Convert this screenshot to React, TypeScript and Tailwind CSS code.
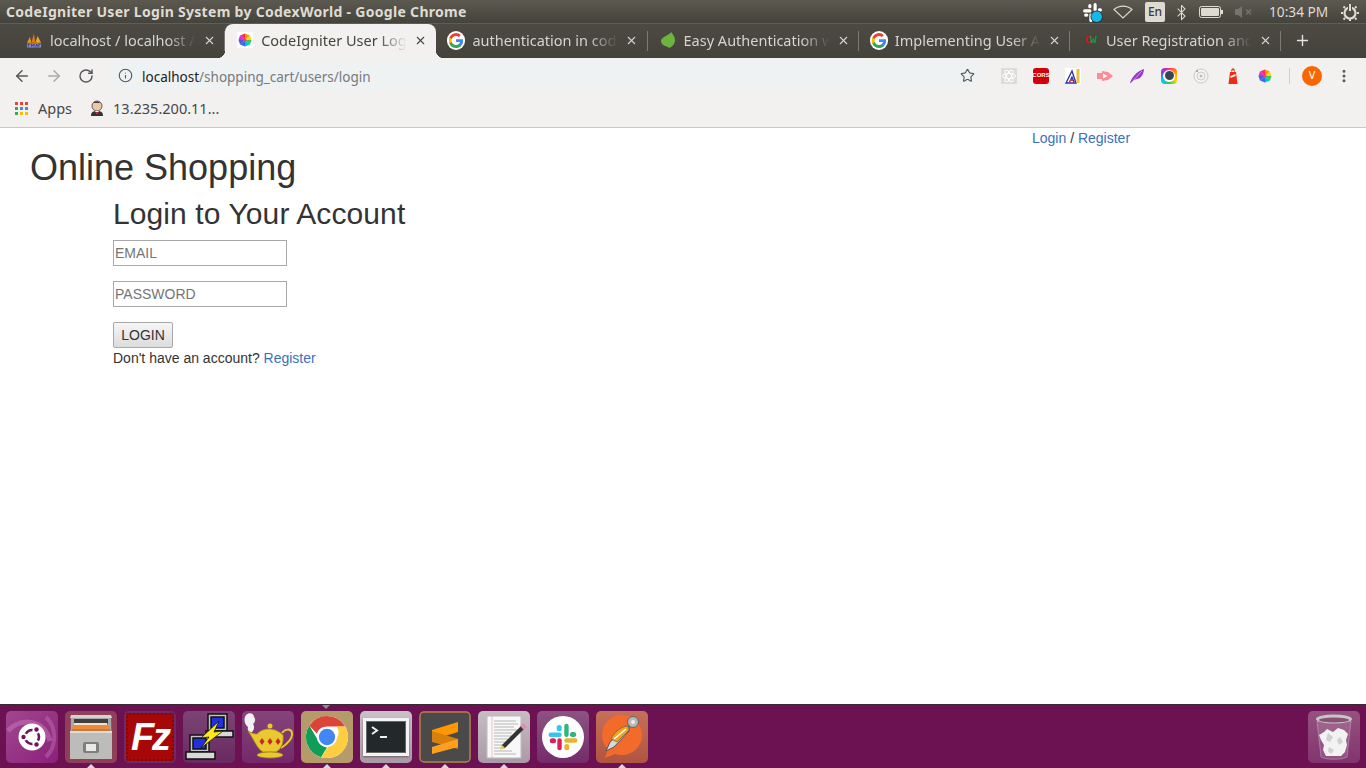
import React from "react";
import { ArrowLeft, ArrowRight, RotateCw, Info, Star, EllipsisVertical, X, Plus, Bluetooth } from "lucide-react";

const GoogleIcon = () => (
  <svg viewBox="0 0 18 18" className="w-4 h-4 rounded-full bg-white p-[1.5px] box-content -m-[1px]">
    <path fill="#4285f4" d="M17.6 9.2c0-.6-.1-1.2-.2-1.8H9v3.4h4.8a4.1 4.1 0 0 1-1.8 2.7v2.2h2.9c1.7-1.6 2.7-3.9 2.7-6.5z" />
    <path fill="#34a853" d="M9 18c2.4 0 4.5-.8 6-2.2l-2.9-2.2c-.8.5-1.8.9-3.1.9-2.4 0-4.3-1.6-5-3.7H1v2.3A9 9 0 0 0 9 18z" />
    <path fill="#fbbc05" d="M4 10.7a5.4 5.4 0 0 1 0-3.4V5H1a9 9 0 0 0 0 8z" />
    <path fill="#ea4335" d="M9 3.6c1.3 0 2.5.5 3.4 1.3L15 2.4A9 9 0 0 0 1 5l3 2.3c.7-2.1 2.6-3.7 5-3.7z" />
  </svg>
);

// phpmyadmin sails
const Pma = () => (
  <svg viewBox="0 0 18 18" className="w-[17px] h-[17px]">
    <path fill="#f0950f" d="M1 11.500 4.500 5l1.500 6.500z" />
    <path fill="#e8770c" d="M6 11.500 9 1l1.500 10.500z" />
    <path fill="#f0a51a" d="M10.500 11.500 13 4l4 7.500z" />
    <rect x="1" y="12" width="16" height="5" rx="1" fill="#8d8fc4" />
    <path stroke="#2f3270" strokeWidth="1" d="M2.500 16v-3h2M6 16v-3l1.500 2 1.500-2v3M11 16l1-3 1 3M14.500 16v-3h2" fill="none" />
  </svg>
);

const Wheel = ({ square }: { square?: boolean }) => (
  <svg viewBox="0 0 16 16" className={`w-4 h-4 ${square ? "bg-white" : ""}`}>
    <path fill="#ff2d55" d="M8 8 3 3.500 8 1.500z" />
    <path fill="#ff9500" d="M8 8V1.500l5 2z" />
    <path fill="#ffd60a" d="M8 8l5-4.500 1.500 4.500z" />
    <path fill="#34c759" d="M8 8h6.500L13 12.500z" />
    <path fill="#00c7be" d="M8 8l5 4.500-5 2z" />
    <path fill="#2c6bff" d="M8 8v6.500l-5-2z" />
    <path fill="#5856d6" d="M8 8l-5 4.500L1.500 8z" />
    <path fill="#d52fd8" d="M8 8H1.500L3 3.500z" />
    <circle cx="8" cy="8" r="1.500" fill="#ff3b7f" />
  </svg>
);

const Leaf = () => (
  <svg viewBox="0 0 16 18" className="w-4 h-[18px]">
    <path fill="#6cb33f" d="M11.5 1C12 3 15 5 15 9c0 4-3 7-6 8-.3-.5-.6-.8-1-1C4 15 1 13 1 10c0-4 7-5 10.500-9z" />
  </svg>
);

const tabs = [
  { title: "localhost / localhost /", icon: <Pma /> },
  { title: "CodeIgniter User Logi", icon: <Wheel square />, active: true },
  { title: "authentication in cod", icon: <GoogleIcon /> },
  { title: "Easy Authentication w", icon: <Leaf /> },
  { title: "Implementing User Au", icon: <GoogleIcon /> },
  {
    title: "User Registration and",
    icon: (
      <span className="whitespace-nowrap text-[11px] leading-4 font-['Liberation_Mono',monospace] tracking-[-1.500px]">
        <span className="text-[#e11212]">C</span>
        <span className="text-[#13a84a]">W</span>
      </span>
    ),
  },
];

const Tab = ({ title, icon, active }: { title: string; icon: React.ReactNode; active?: boolean }) => (
  <div className={`relative w-[211.2px] h-[34px] shrink-0 flex items-center pl-3 pb-[2px] ${active ? "bg-[#f2f1f0] rounded-t-[8px] text-[#45443f]" : "text-[#d5d4d0]"}`}>
    {active && <span className="absolute -left-2 bottom-0 w-2 h-2 bg-[radial-gradient(circle_at_0_0,transparent_8px,#f2f1f0_8.500px)]" />}
    {active && <span className="absolute -right-2 bottom-0 w-2 h-2 bg-[radial-gradient(circle_at_100%_0,transparent_8px,#f2f1f0_8.500px)]" />}
    <span className="w-4 h-4 flex items-center justify-center shrink-0">{icon}</span>
    <span className="ml-2 w-[146px] overflow-hidden whitespace-nowrap text-[14.500px] leading-5 [mask-image:linear-gradient(to_right,black_80%,transparent)]">{title}</span>
    <X size={13} strokeWidth={2} className="ml-[7px] shrink-0" />
    {!active && <span className="absolute right-0 top-[7px] h-5 w-px bg-[#7c7a72]" />}
  </div>
);

const ExtSlot = ({ children }: { children: React.ReactNode }) => (
  <span className="w-8 h-4 flex items-center justify-center shrink-0">{children}</span>
);

const Extensions = () => (
  <div className="flex items-center">
    <ExtSlot>
      <svg viewBox="0 0 16 16" className="w-4 h-4">
        <rect width="16" height="16" fill="#dcdcdc" />
        <g fill="none" stroke="#fff" strokeWidth="1">
          <ellipse cx="8" cy="8" rx="6.500" ry="2.500" />
          <ellipse cx="8" cy="8" rx="6.500" ry="2.500" transform="rotate(60 8 8)" />
          <ellipse cx="8" cy="8" rx="6.500" ry="2.500" transform="rotate(120 8 8)" />
        </g>
      </svg>
    </ExtSlot>
    <ExtSlot>
      <span className="w-4 h-4 rounded-[3px] bg-[#d3000c] text-white text-[6px] font-bold flex items-center justify-center font-['Liberation_Sans',sans-serif]">CORS</span>
    </ExtSlot>
    <ExtSlot>
      <svg viewBox="0 0 16 16" className="w-4 h-4">
        <rect width="16" height="16" fill="#fff" />
        <path fill="none" stroke="#2b2ba8" strokeWidth="1.300" d="M1 15 7 3l4 12zM4.500 14 7 9l2 5" />
        <rect x="11.500" y="1" width="3" height="14" fill="#e6c13a" />
        <path fill="#d33" d="M5 11h3v2H5z" />
      </svg>
    </ExtSlot>
    <ExtSlot>
      <svg viewBox="0 0 16 16" className="w-4 h-4">
        <path fill="#ff8a97" d="M0 5h5V3l6 1 5 4-5 4-6 1v-2H0z" />
        <path fill="#fff" d="M6 5.500 10.500 8 6 10.500z" />
      </svg>
    </ExtSlot>
    <ExtSlot>
      <svg viewBox="0 0 16 16" className="w-4 h-4">
        <path fill="#9a35c9" d="M1 15C3 9 8 3 15 1c0 4-2 7-4 9-2 1-4 1-6 2l-3 3z" />
        <path stroke="#e6c8f2" strokeWidth=".7" d="M2 15 13 3" />
      </svg>
    </ExtSlot>
    <ExtSlot>
      <span className="w-4 h-4 rounded-[4px] bg-[conic-gradient(#ff2d87,#ff9500,#ffd60a,#34c759,#00c7ff,#7a3df0,#ff2d87)] flex items-center justify-center">
        <span className="w-3 h-3 rounded-full bg-white flex items-center justify-center">
          <span className="w-[9px] h-[9px] rounded-full bg-[#37474f]" />
        </span>
      </span>
    </ExtSlot>
    <ExtSlot>
      <svg viewBox="0 0 16 16" className="w-4 h-4">
        <circle cx="8" cy="8" r="7" fill="#f4f4f4" stroke="#c8c8c8" />
        <circle cx="8" cy="8" r="4" fill="none" stroke="#c8c8c8" />
        <circle cx="8" cy="8" r="1.500" fill="#bbb" />
        <circle cx="4" cy="3" r="1" fill="#999" />
      </svg>
    </ExtSlot>
    <ExtSlot>
      <svg viewBox="0 0 16 16" className="w-4 h-4">
        <path fill="#f32a12" d="M6 2l2-2 2 2v2h1l1.500 12H3.500L5 4h1z" />
        <path fill="#fff" d="M5.500 8l5-2v2l-5 2zM6.500 2.500h3V4h-3z" />
      </svg>
    </ExtSlot>
    <ExtSlot>
      <Wheel />
    </ExtSlot>
  </div>
);

const Tile = ({ bg, children }: { bg: string; children: React.ReactNode }) => (
  <div className={`w-[52px] h-[52px] rounded-[5px] shrink-0 flex items-center justify-center overflow-hidden ${bg}`}>{children}</div>
);

const UbuntuIcon = () => (
  <svg viewBox="0 0 52 52" className="w-[52px] h-[52px]">
    <path fill="none" stroke="#c77ab9" strokeWidth="5" opacity=".5" d="M2 20C14 6 38 8 44 30" />
    <path fill="none" stroke="#c77ab9" strokeWidth="4" opacity=".4" d="M40 6c10 10 12 28 0 40" />
    <circle cx="26" cy="26" r="13.500" fill="#fff" />
    <circle cx="26" cy="26" r="7" fill="none" stroke="#6f1560" strokeWidth="2.600" />
    <g fill="#fff">
      <circle cx="18.500" cy="26" r="3.400" />
      <circle cx="29.800" cy="19.500" r="3.400" />
      <circle cx="29.800" cy="32.500" r="3.400" />
    </g>
    <g fill="#6f1560">
      <circle cx="17.500" cy="26" r="2.200" />
      <circle cx="30.500" cy="18.500" r="2.200" />
      <circle cx="30.500" cy="33.500" r="2.200" />
    </g>
  </svg>
);

const FilesIcon = () => (
  <svg viewBox="0 0 52 52" className="w-[52px] h-[52px]">
    <path fill="#a8a8a8" d="M6 5h40l1 43H5z" />
    <path fill="#d2d2d2" d="M6 4h40l1 3H5z" />
    <path fill="#3f3f3f" d="M9 8h34v12H9z" />
    <path fill="#f3e2c6" d="M9 12h33l1 3H9z" />
    <path fill="#ee8a3c" d="M8 14h36l1 5H7z" />
    <path fill="#c47a3b" d="M7 18h38v2H7z" />
    <path fill="#bcbcba" d="M5 20h42v27a1 1 0 0 1-1 1H6a1 1 0 0 1-1-1z" />
    <rect x="5" y="20" width="42" height="2" fill="#dcdcdc" />
    <rect x="18" y="31" width="16" height="11" rx="2" fill="#7e7e7e" />
    <rect x="21" y="33" width="10" height="7" fill="#e8e8e8" />
  </svg>
);

const FzIcon = () => (
  <div className="w-[48px] h-[48px] bg-[#a80707] flex items-center justify-center rounded-[2px] border-[2px] border-dotted border-[#7e0b0b]">
    <span className="text-white font-bold italic text-[38px] leading-none font-['Liberation_Sans',sans-serif] tracking-[-2px]">Fz</span>
  </div>
);

const PuttyIcon = () => (
  <svg viewBox="0 0 52 52" className="w-[52px] h-[52px]">
    <g stroke="#111" strokeWidth="1.500">
      <rect x="25" y="3" width="19" height="17" fill="#c4c4c4" />
      <rect x="28" y="6" width="13" height="11" fill="#2130d8" />
      <rect x="23" y="20" width="27" height="6" fill="#d8d8d8" />
      <rect x="7" y="24" width="19" height="17" fill="#c4c4c4" />
      <rect x="10" y="27" width="13" height="11" fill="#2130d8" />
      <rect x="3" y="41" width="29" height="7" fill="#d8d8d8" />
    </g>
    <path fill="#ffe81a" stroke="#111" strokeWidth=".8" d="M36 10 18 27l8-1-8 11 22-17-9 1z" />
  </svg>
);

const GenieIcon = () => (
  <svg viewBox="0 0 52 52" className="w-[52px] h-[52px]">
    <path fill="#f2f2f2" d="M4 4c3-3 8-2 8 2 2 2 1 6-1 7 2 3 1 6-1 8-3 1-5-2-4-5-3-2-5-8-2-12z" />
    <path fill="none" stroke="#e5c52e" strokeWidth="2" d="M40 22c3-4 9-5 10 0 1 6-5 11-11 15" />
    <path fill="#e9c92f" stroke="#a5871a" strokeWidth=".8" d="M6 20c4 2 6 3 9 3 3-3 6-5 12-5s11 3 14 6c1 6-1 14-7 17h-13C15 38 13 30 6 20z" />
    <circle cx="28" cy="15" r="2.500" fill="#e9c92f" />
    <ellipse cx="28" cy="44" rx="13" ry="3" fill="#e9c92f" stroke="#a5871a" strokeWidth=".8" />
    <g fill="#c62828">
      <path d="M20 27l2.500 3.500L20 34l-2.500-3.500z" />
      <path d="M28 27l2.500 3.500L28 34l-2.500-3.500z" />
      <path d="M36 27l2.500 3.500L36 34l-2.500-3.500z" />
    </g>
  </svg>
);

const ChromeIcon = () => (
  <svg viewBox="0 0 48 48" className="w-[46px] h-[46px]">
    <circle cx="24" cy="24" r="22" fill="#fff" />
    <path fill="#db4437" d="M24 2a22 22 0 0 1 19 11H24a11 11 0 0 0-10.500 7.500L5.600 12A22 22 0 0 1 24 2z" />
    <path fill="#0f9d58" d="M5.600 12l9.500 16.500A11 11 0 0 0 24 35l-6.200 10.100A22 22 0 0 1 5.600 12z" />
    <path fill="#ffcd40" d="M43 13a22 22 0 0 1-25.200 32.100L28 30a11 11 0 0 0 6-17z" />
    <circle cx="24" cy="24" r="10.500" fill="#fff" />
    <circle cx="24" cy="24" r="8.500" fill="#4285f4" />
  </svg>
);

const TerminalIcon = () => (
  <div className="w-[46px] h-[38px] bg-[#f4f4f4] p-[3px] shadow-[0_1px_2px_#0006]">
    <div className="w-full h-full bg-[#23282a] pl-1 pt-1 border border-[#666]">
      <svg viewBox="0 0 24 14" className="w-6 h-3.5">
        <path fill="none" stroke="#eee" strokeWidth="2" d="M1 1l5 3.500L1 8" />
        <path stroke="#eee" strokeWidth="2" d="M9 11h7" />
      </svg>
    </div>
  </div>
);

const SublimeIcon = () => (
  <svg viewBox="0 0 52 52" className="w-[52px] h-[52px]">
    <rect x="1" y="1" width="50" height="50" rx="4" fill="#4a4a4a" stroke="#bb7b4c" strokeWidth="1.500" />
    <path fill="#ff9800" d="M39 11v10L13 29V19z" />
    <path fill="#d97f0c" d="M13 20l26 8v10L13 31z" />
    <path fill="#ff9f1c" d="M39 28 13 36v7l26-7z" />
  </svg>
);

const EditorIcon = () => (
  <svg viewBox="0 0 52 52" className="w-[52px] h-[52px]">
    <rect x="9" y="5" width="34" height="42" fill="#f8f8f8" stroke="#bbb" />
    <path stroke="#f0a0a0" strokeWidth=".6" d="M14 5v42" />
    <g stroke="#a5a5a5" strokeWidth=".8">
      <path d="M16 10h22M16 13h24M16 16h20M16 19h24M16 22h18M16 25h20M16 28h14M16 31h12M16 34h10M16 37h8M16 40h18M16 43h22" />
    </g>
    <path fill="#333" d="M45 13l3 3-21 21-4 1 1-4z" />
    <path fill="#e090a8" d="M42 15l3-3 4 4-3 3z" />
    <path fill="#e8d24a" d="M24 34l3 3-5 2z" />
  </svg>
);

const SlackIcon = ({ size }: { size: number }) => (
  <svg viewBox="0 0 54 54" width={size} height={size}>
    <g fill="#36c5f0">
      <rect x="4" y="20" width="21" height="7" rx="3.500" />
      <rect x="17" y="8" width="8" height="10" rx="4" />
    </g>
    <g fill="#2eb67d">
      <rect x="29" y="6" width="7" height="21" rx="3.500" />
      <rect x="38" y="19" width="10" height="8" rx="4" />
    </g>
    <g fill="#ecb22e">
      <rect x="29" y="29" width="21" height="7" rx="3.500" />
      <rect x="29" y="38" width="8" height="10" rx="4" />
    </g>
    <g fill="#e01e5a">
      <rect x="18" y="29" width="7" height="19" rx="3.500" />
      <rect x="6" y="29" width="10" height="8" rx="4" />
    </g>
  </svg>
);

const PostmanIcon = () => (
  <svg viewBox="0 0 52 52" className="w-[52px] h-[52px]">
    <circle cx="26" cy="24" r="20" fill="#f26b2a" />
    <path fill="#f26b2a" d="M12 38l-3 9 10-4z" />
    <circle cx="37" cy="11" r="5.500" fill="#b8b8b8" stroke="#666" />
    <circle cx="37" cy="11" r="2" fill="#eee" />
    <path fill="#d8d8d8" stroke="#555" d="M33 15 14 31l-4 9 8-4 15-16z" />
    <path fill="#f6a11b" stroke="#555" strokeWidth=".6" d="M32 15c-6 0-14 6-17 13l6 3 12-12z" />
    <path stroke="#fff" strokeWidth="1.500" d="M18 28 30 18" />
  </svg>
);

const TrashIcon = () => (
  <svg viewBox="0 0 52 52" className="w-[52px] h-[52px]">
    <path fill="#ffffff22" stroke="#ffffff44" d="M9 10l4 36c4 3 22 3 26 0l4-36z" />
    <ellipse cx="26" cy="8" rx="18" ry="4.500" fill="#c6c6c6" />
    <ellipse cx="26" cy="9" rx="15" ry="2.500" fill="#8c5077" />
    <path fill="#f2f2f2" d="M11 24l5-3 3-3 6 3 5-4 6 2 4 4-2 6 1 5-2 7-4 4H18l-3-6 1-5-3-5z" />
    <path fill="#cfcfcf" d="M20 22l5 4-3 5-4-2zM32 26l3 5-4 3-2-5zM21 36l5 3-3 4-3-3z" />
  </svg>
);

const dockItems = [
  { bg: "bg-gradient-to-br from-[#a1468f] to-[#8b1f7a]", icon: <UbuntuIcon />, running: false },
  { bg: "bg-[#8f3f57]", icon: <FilesIcon />, running: true },
  { bg: "bg-[#6f2a63]", icon: <FzIcon />, running: false },
  { bg: "bg-gradient-to-b from-[#7b4474] to-[#682a60]", icon: <PuttyIcon />, running: false },
  { bg: "bg-gradient-to-b from-[#84447a] to-[#74296a]", icon: <GenieIcon />, running: false },
  { bg: "bg-[#b59b6a]", icon: <ChromeIcon />, running: true },
  { bg: "bg-gradient-to-b from-[#c9c2c7] to-[#a99aa5]", icon: <TerminalIcon />, running: true },
  { bg: "bg-[#4a4a4a]", icon: <SublimeIcon />, running: true },
  { bg: "bg-gradient-to-b from-[#c7bcc4] to-[#aa9aa6]", icon: <EditorIcon />, running: true },
  {
    bg: "bg-gradient-to-b from-[#8c5382] to-[#742b6a]",
    icon: (
      <span className="w-[42px] h-[42px] rounded-full bg-white flex items-center justify-center">
        <SlackIcon size={34} />
      </span>
    ),
    running: false,
  },
  { bg: "bg-gradient-to-b from-[#c4705a] to-[#b0543f]", icon: <PostmanIcon />, running: true },
];

const App = () => {
  return (
    <div className="w-[1366px] h-[768px] overflow-hidden flex flex-col bg-white font-['Liberation_Sans',sans-serif] text-[14px] text-[#333]">
      {/* ubuntu top panel */}
      <div className="h-6 shrink-0 flex items-center bg-gradient-to-b from-[#5c5a50] to-[#43423b] text-[#dfdbd2] font-['Noto_Sans',sans-serif]">
        <span className="ml-1.5 font-bold text-[14px] leading-5 tracking-[.3px]">CodeIgniter User Login System by CodexWorld - Google Chrome</span>
        <div className="ml-auto flex items-center">
          <svg viewBox="0 0 20 20" className="w-[21px] h-[21px] mr-[10px]">
            <g fill="#fff">
              <rect x="1" y="7" width="8" height="3" rx="1.500" />
              <rect x="6" y="2" width="3" height="4" rx="1.500" />
              <rect x="11" y="1" width="3" height="8" rx="1.500" />
              <rect x="15" y="6" width="4" height="3" rx="1.500" />
              <rect x="7" y="11" width="3" height="8" rx="1.500" />
              <rect x="2" y="11" width="4" height="3" rx="1.500" />
            </g>
            <circle cx="14" cy="14" r="5.500" fill="#16b6e8" stroke="#222" strokeWidth=".8" />
          </svg>
          <svg viewBox="0 0 20 14" className="w-5 h-[14px] mr-3">
            <path fill="none" stroke="#dfdbd2" strokeWidth="1.100" d="M1 4.500C6 0 14 0 19 4.500L10 13z" />
          </svg>
          <span className="w-5 h-5 rounded-[2px] bg-[#dfdbd2] text-[#3c3b37] text-[12px] font-medium flex items-center justify-center">En</span>
          <Bluetooth size={17} strokeWidth={1.500} className="ml-[8px] mr-[9px]" />
          <svg viewBox="0 0 24 14" className="w-6 h-[14px] mr-[11px]">
            <rect x=".5" y="1.500" width="21" height="11" rx="2" fill="none" stroke="#dfdbd2" />
            <rect x="2" y="3" width="18" height="8" rx="1" fill="#dfdbd2" />
            <rect x="22" y="5" width="2" height="4" fill="#dfdbd2" />
          </svg>
          <svg viewBox="0 0 20 14" className="w-5 h-[14px] mr-[15px]">
            <path fill="#75736b" d="M1 4h3l4-3v12l-4-3H1z" />
            <path stroke="#75736b" strokeWidth="1.400" d="M12 4.500l5 5M17 4.500l-5 5" />
          </svg>
          <span className="text-[13.700px] leading-5 w-[60px] whitespace-nowrap">10:34 PM</span>
          <svg viewBox="0 0 18 18" className="w-[18px] h-[18px] ml-[12px] mr-[7px]">
            <circle cx="9" cy="10" r="5.500" fill="none" stroke="#dfdbd2" strokeWidth="2.200" />
            <g stroke="#dfdbd2" strokeWidth="2">
              <path d="M9 15v3M2 10H0M18 10h-2M4 5 2.500 3.500M14 5l1.500-1.500M4 15l-1.500 1.500M14 15l1.500 1.500" />
            </g>
            <path stroke="#4c4a43" strokeWidth="4" d="M9 1v7" />
            <path stroke="#dfdbd2" strokeWidth="2" d="M9 1v7" />
          </svg>
        </div>
      </div>

      {/* chrome tab strip */}
      <div className="h-[34px] shrink-0 flex pl-[14px] border-t border-t-[#5f5d54] bg-gradient-to-b from-[#4c4a43] to-[#43423b] font-['Noto_Sans',sans-serif] box-content -mt-px">
        {tabs.map((t) => (
          <Tab key={t.title} title={t.title} icon={t.icon} active={t.active} />
        ))}
        <Plus size={17} strokeWidth={2} className="ml-[13px] mt-[8px] text-[#e5e3de]" />
      </div>

      {/* chrome toolbar */}
      <div className="h-[35px] shrink-0 flex items-center bg-[#f2f1f0] font-['Noto_Sans',sans-serif] text-[#5f6368]">
        <ArrowLeft size={18} strokeWidth={2} className="ml-[13px] text-[#55585c]" />
        <ArrowRight size={18} strokeWidth={2} className="ml-[14px] text-[#a9abad]" />
        <RotateCw size={16} strokeWidth={2.200} className="ml-[15px] text-[#55585c]" />
        <div className="ml-[14px] w-[875px] h-[27px] rounded-full bg-[#eff2f3] flex items-center pl-2.5">
          <Info size={15} strokeWidth={1.800} className="text-[#55585c]" />
          <span className="ml-[9px] mt-[2px] text-[13.500px] leading-5 text-[#222]">localhost</span>
          <span className="mt-[2px] text-[13.500px] leading-5 text-[#76797e]">/shopping_cart/users/login</span>
          <Star size={15} strokeWidth={1.800} className="ml-auto mr-[8px] text-[#55585c]" />
        </div>
        <div className="ml-[10px]">
          <Extensions />
        </div>
        <span className="ml-[8px] w-px h-4 bg-[#cfcfcc]" />
        <span className="ml-[12px] w-5 h-5 rounded-full bg-[#f86600] text-white text-[11px] flex items-center justify-center">V</span>
        <EllipsisVertical size={16} strokeWidth={2.500} className="ml-[14px] text-[#55585c]" />
      </div>

      {/* bookmarks bar */}
      <div className="h-[35px] shrink-0 flex items-center pl-[15px] pb-[2px] bg-[#f2f1f0] border-b border-b-[#c8c8c6] font-['Noto_Sans',sans-serif] text-[#474747] text-[14.500px]">
        <div className="grid grid-cols-3 gap-[2px] w-[13px] -mt-[2px]">
          {["bg-[#ea4335]", "bg-[#ea4335]", "bg-[#ea4335]", "bg-[#34a853]", "bg-[#4285f4]", "bg-[#4285f4]", "bg-[#34a853]", "bg-[#fbbc05]", "bg-[#fbbc05]"].map((c, i) => (
            <span key={i} className={`w-[3px] h-[3px] ${c}`} />
          ))}
        </div>
        <span className="ml-[10px]">Apps</span>
        <svg viewBox="0 0 16 16" className="w-4 h-4 ml-[17px] -mt-[2px]">
          <circle cx="8" cy="6" r="5" fill="#e8c9a8" stroke="#4a3a30" strokeWidth=".8" />
          <path fill="#333" d="M2 16c0-4 2-5 6-5s6 1 6 5z" />
          <path fill="#fff" d="M6 11h4l-2 3z" />
          <path fill="#b23" d="M6 12h4l-2 2z" />
          <path fill="#4a3a30" d="M4 3c2-2 6-2 7 0-3 0-5 0-7 0z" />
        </svg>
        <span className="ml-2">13.235.200.11...</span>
      </div>

      {/* page */}
      <div className="flex-1 min-h-0 bg-white">
        <div className="pl-[1032px] leading-5">
          <a className="text-[#3a70c0]">Login</a> / <a className="text-[#3a70c0]">Register</a>
        </div>
        <h1 className="pl-[30px] text-[36px] leading-10 font-normal text-[#333]">Online Shopping</h1>
        <div className="pl-[113px]">
          <h2 className="mt-[9px] text-[30px] leading-[33px] font-normal tracking-[.1px] text-[#333]">Login to Your Account</h2>
          <div className="mt-[10px]">
            <input placeholder="EMAIL" className="block w-[174px] h-[26px] border border-[#a9a9a9] px-px text-[14px] bg-white placeholder:text-[#757575]" />
            <input placeholder="PASSWORD" className="block mt-[15px] w-[174px] h-[26px] border border-[#a9a9a9] px-px text-[14px] bg-white placeholder:text-[#757575]" />
            <button className="block mt-[15px] w-[60px] h-[26px] rounded-[2px] border border-[#a9a9a9] bg-gradient-to-b from-[#f6f6f6] to-[#dcdcdc] text-[14px] text-[#333]">LOGIN</button>
          </div>
          <p className="leading-5">
            Don't have an account? <a className="text-[#3a70c0]">Register</a>
          </p>
        </div>
      </div>

      {/* unity launcher */}
      <div className="relative h-16 shrink-0 flex items-center pl-1.5 pr-1.5 gap-[7px] bg-[#6c1152] border-t border-t-[#3a2a35]">
        {dockItems.map((d, i) => (
          <div key={i} className="relative">
            <Tile bg={d.bg}>{d.icon}</Tile>
            {d.running && <span className="absolute left-[21px] -bottom-[6px] w-0 h-0 border-x-[5px] border-x-transparent border-b-[5px] border-b-[#d9d9d9]" />}
            {i === 5 && <span className="absolute left-[21px] -top-[6px] w-0 h-0 border-x-[4px] border-x-transparent border-t-[4px] border-t-[#8d8d8d]" />}
          </div>
        ))}
        <div className="ml-auto">
          <Tile bg="bg-gradient-to-b from-[#94527f] to-[#82346f]">
            <TrashIcon />
          </Tile>
        </div>
      </div>
    </div>
  );
};

export default App;
